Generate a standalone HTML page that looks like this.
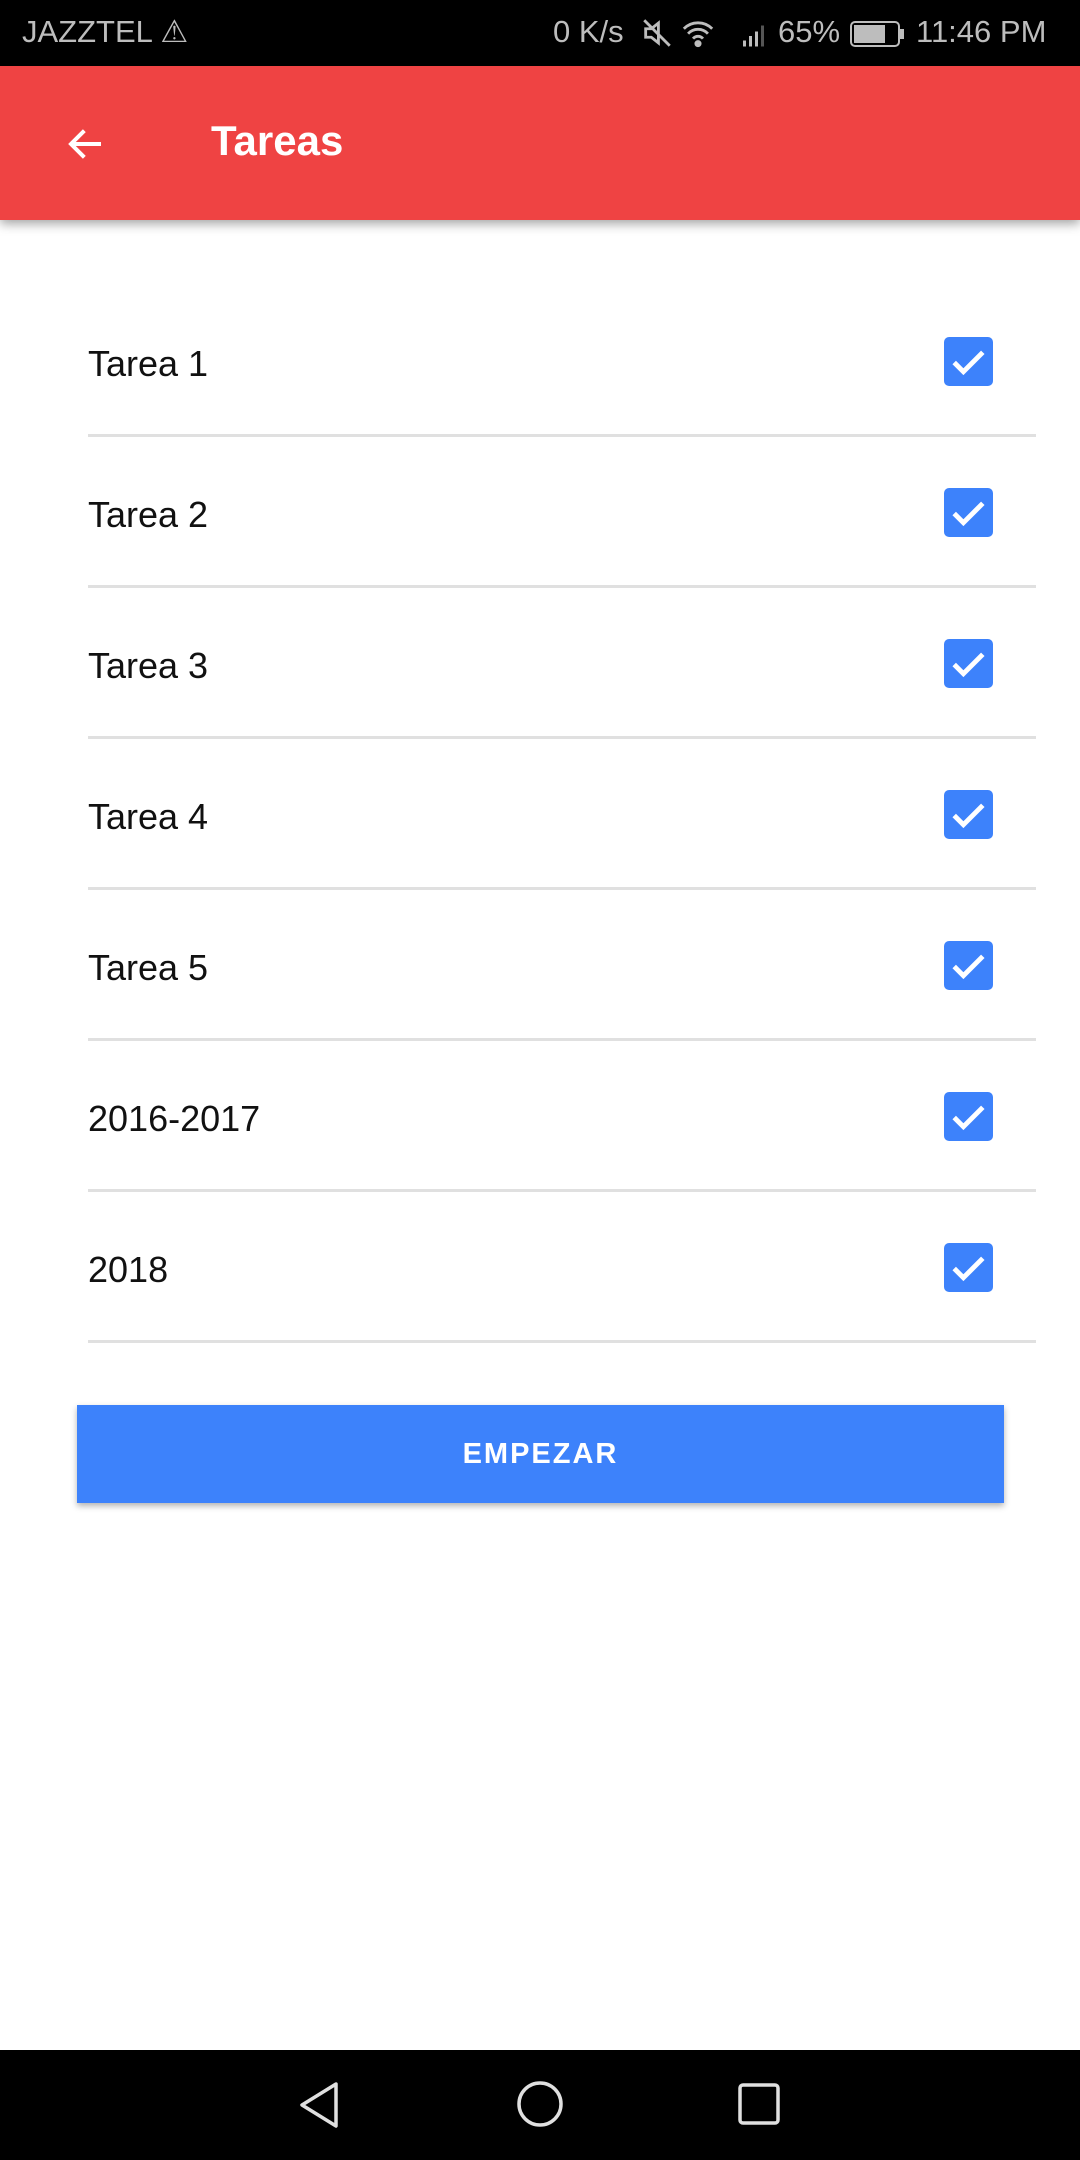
<!DOCTYPE html>
<html><head><meta charset="utf-8"><style>
*{margin:0;padding:0;box-sizing:border-box}
body{width:1080px;height:2160px;position:relative;background:#fff;font-family:"Liberation Sans",Roboto,sans-serif;overflow:hidden}
.sb{position:absolute;top:0;left:0;width:1080px;height:66px;background:#000;color:#bdbdbd;font-size:31px}
.sb span{position:absolute;top:14px}
.ab{position:absolute;top:66px;left:0;width:1080px;height:154px;background:#EF4343;box-shadow:0 4px 10px rgba(0,0,0,.35)}
.ab .t{position:absolute;left:211px;top:51px;color:#fff;font-size:42px;font-weight:bold}
.row{position:absolute;left:88px;width:948px;height:151px;border-bottom:3px solid #e0e0e0}
.row .l{position:absolute;left:0;top:57px;font-size:36px;color:#111}
.cb{position:absolute;left:856px;top:51px;width:49px;height:49px;background:#3D82FB;border-radius:5px}
.btn{position:absolute;left:77px;top:1405px;width:927px;height:98px;background:#3D82FB;color:#fff;font-size:29px;font-weight:bold;letter-spacing:2px;text-align:center;line-height:98px;box-shadow:0 3px 6px rgba(0,0,0,.3)}
.nav{position:absolute;top:2050px;left:0;width:1080px;height:110px;background:#000}
</style></head><body>
<div class="sb">
<span style="left:22px">JAZZTEL ⚠</span>
<span style="left:553px">0 K/s</span>
<svg style="position:absolute;left:640px;top:16px" width="34" height="34" viewBox="0 0 24 24" fill="none" stroke="#bdbdbd" stroke-width="2"><path d="M4 9h4l5-4v14l-5-4H4z M3 3l18 18"/></svg>
<svg style="position:absolute;left:680px;top:16px" width="36" height="34" viewBox="0 0 24 24" fill="none" stroke="#bdbdbd" stroke-width="2"><path d="M2 9a14 14 0 0 1 20 0M5 12.5a9.5 9.5 0 0 1 14 0M8.5 16a4.5 4.5 0 0 1 7 0"/><circle cx="12" cy="19.5" r="1.5" fill="#bdbdbd"/></svg>
<svg style="position:absolute;left:740px;top:18px" width="30" height="30" viewBox="0 0 20 20" fill="#bdbdbd"><rect x="2" y="15" width="2" height="4"/><rect x="6" y="12" width="2" height="7"/><rect x="10" y="9" width="2" height="10"/><rect x="14" y="5" width="2" height="14" fill="#555"/></svg>
<span style="left:778px">65%</span>
<svg style="position:absolute;left:850px;top:20px" width="56" height="28" viewBox="0 0 56 28"><rect x="1" y="2" width="48" height="24" rx="4" fill="none" stroke="#bdbdbd" stroke-width="2"/><rect x="4" y="5" width="31" height="18" fill="#bdbdbd"/><rect x="50" y="9" width="4" height="10" fill="#bdbdbd"/></svg>
<span style="left:916px">11:46 PM</span>
</div>
<div class="ab">
<svg style="position:absolute;left:66px;top:58px" width="40" height="40" viewBox="0 0 24 24" fill="none" stroke="#fff" stroke-width="2.4"><path d="M21 12H4M11 4l-8 8 8 8"/></svg>
<div class="t">Tareas</div>
</div>
<div class="row" style="top:286px"><div class="l">Tarea 1</div><svg class="cb" viewBox="0 0 24 24"><path d="M5 12.5l4.5 4.5L19 7.5" fill="none" stroke="#fff" stroke-width="2.4"/></svg></div>
<div class="row" style="top:437px"><div class="l">Tarea 2</div><svg class="cb" viewBox="0 0 24 24"><path d="M5 12.5l4.5 4.5L19 7.5" fill="none" stroke="#fff" stroke-width="2.4"/></svg></div>
<div class="row" style="top:588px"><div class="l">Tarea 3</div><svg class="cb" viewBox="0 0 24 24"><path d="M5 12.5l4.5 4.5L19 7.5" fill="none" stroke="#fff" stroke-width="2.4"/></svg></div>
<div class="row" style="top:739px"><div class="l">Tarea 4</div><svg class="cb" viewBox="0 0 24 24"><path d="M5 12.5l4.5 4.5L19 7.5" fill="none" stroke="#fff" stroke-width="2.4"/></svg></div>
<div class="row" style="top:890px"><div class="l">Tarea 5</div><svg class="cb" viewBox="0 0 24 24"><path d="M5 12.5l4.5 4.5L19 7.5" fill="none" stroke="#fff" stroke-width="2.4"/></svg></div>
<div class="row" style="top:1041px"><div class="l">2016-2017</div><svg class="cb" viewBox="0 0 24 24"><path d="M5 12.5l4.5 4.5L19 7.5" fill="none" stroke="#fff" stroke-width="2.4"/></svg></div>
<div class="row" style="top:1192px"><div class="l">2018</div><svg class="cb" viewBox="0 0 24 24"><path d="M5 12.5l4.5 4.5L19 7.5" fill="none" stroke="#fff" stroke-width="2.4"/></svg></div>
<div class="btn">EMPEZAR</div>
<div class="nav">
<svg style="position:absolute;left:296px;top:30px" width="48" height="50" viewBox="0 0 48 50" fill="none" stroke="#e0e0e0" stroke-width="3.5" stroke-linejoin="round"><path d="M40 4L6 25l34 21z"/></svg>
<svg style="position:absolute;left:516px;top:30px" width="48" height="48" viewBox="0 0 48 48" fill="none" stroke="#e0e0e0" stroke-width="3.5"><circle cx="24" cy="24" r="21"/></svg>
<svg style="position:absolute;left:737px;top:32px" width="44" height="44" viewBox="0 0 44 44" fill="none" stroke="#e0e0e0" stroke-width="3.5"><rect x="3" y="3" width="38" height="38" rx="3"/></svg>
</div>
</body></html>
